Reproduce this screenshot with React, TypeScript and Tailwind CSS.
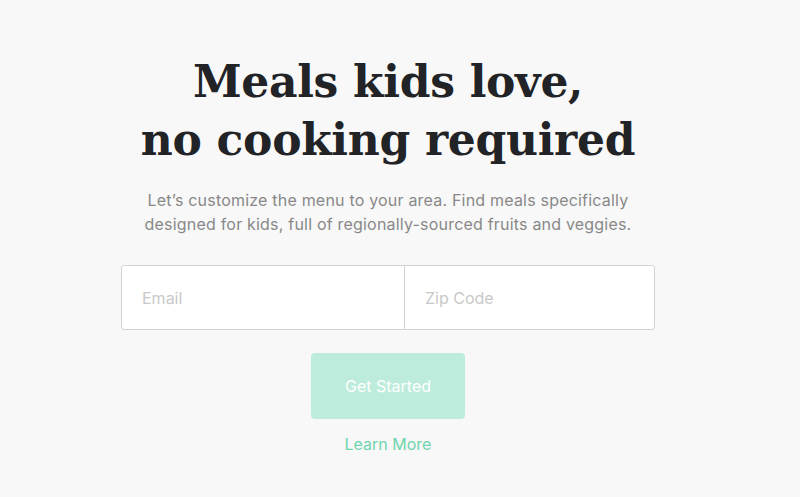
export default function App() {
  return (
    <div className="min-h-[497px] w-full bg-[#f8f8f8] flex flex-col items-center pt-[53px] pr-[24px] font-['Inter',sans-serif]">
      <h1 className="text-center font-['DejaVu_Serif',serif] font-bold text-[44px] leading-[58px] tracking-[-0.3px] text-[#222326]">
        Meals kids love,
        <br />
        no cooking required
      </h1>
      <p className="mt-[19px] text-center text-[16px] leading-[24px] tracking-[0.2px] text-[#888888]">
        Let’s customize the menu to your area. Find meals specifically
        <br />
        designed for kids, full of regionally-sourced fruits and veggies.
      </p>
      <div className="mt-[29px] flex w-[534px] h-[65px] rounded-[3px] border border-[#d3d3d3] bg-white">
        <input
          placeholder="Email"
          className="w-[283px] h-full border-r border-[#d3d3d3] bg-transparent px-5 text-[16px] outline-none placeholder:text-[#c9c9c9]"
        />
        <input
          placeholder="Zip Code"
          className="flex-1 h-full bg-transparent px-5 text-[16px] outline-none placeholder:text-[#c9c9c9]"
        />
      </div>
      <button className="mt-[23px] w-[154px] h-[66px] rounded-[4px] bg-[#bdecdc] text-white text-[16px]">
        Get Started
      </button>
      <a className="mt-[13px] text-[16px] text-[#6fd4ad]">Learn More</a>
    </div>
  )
}
